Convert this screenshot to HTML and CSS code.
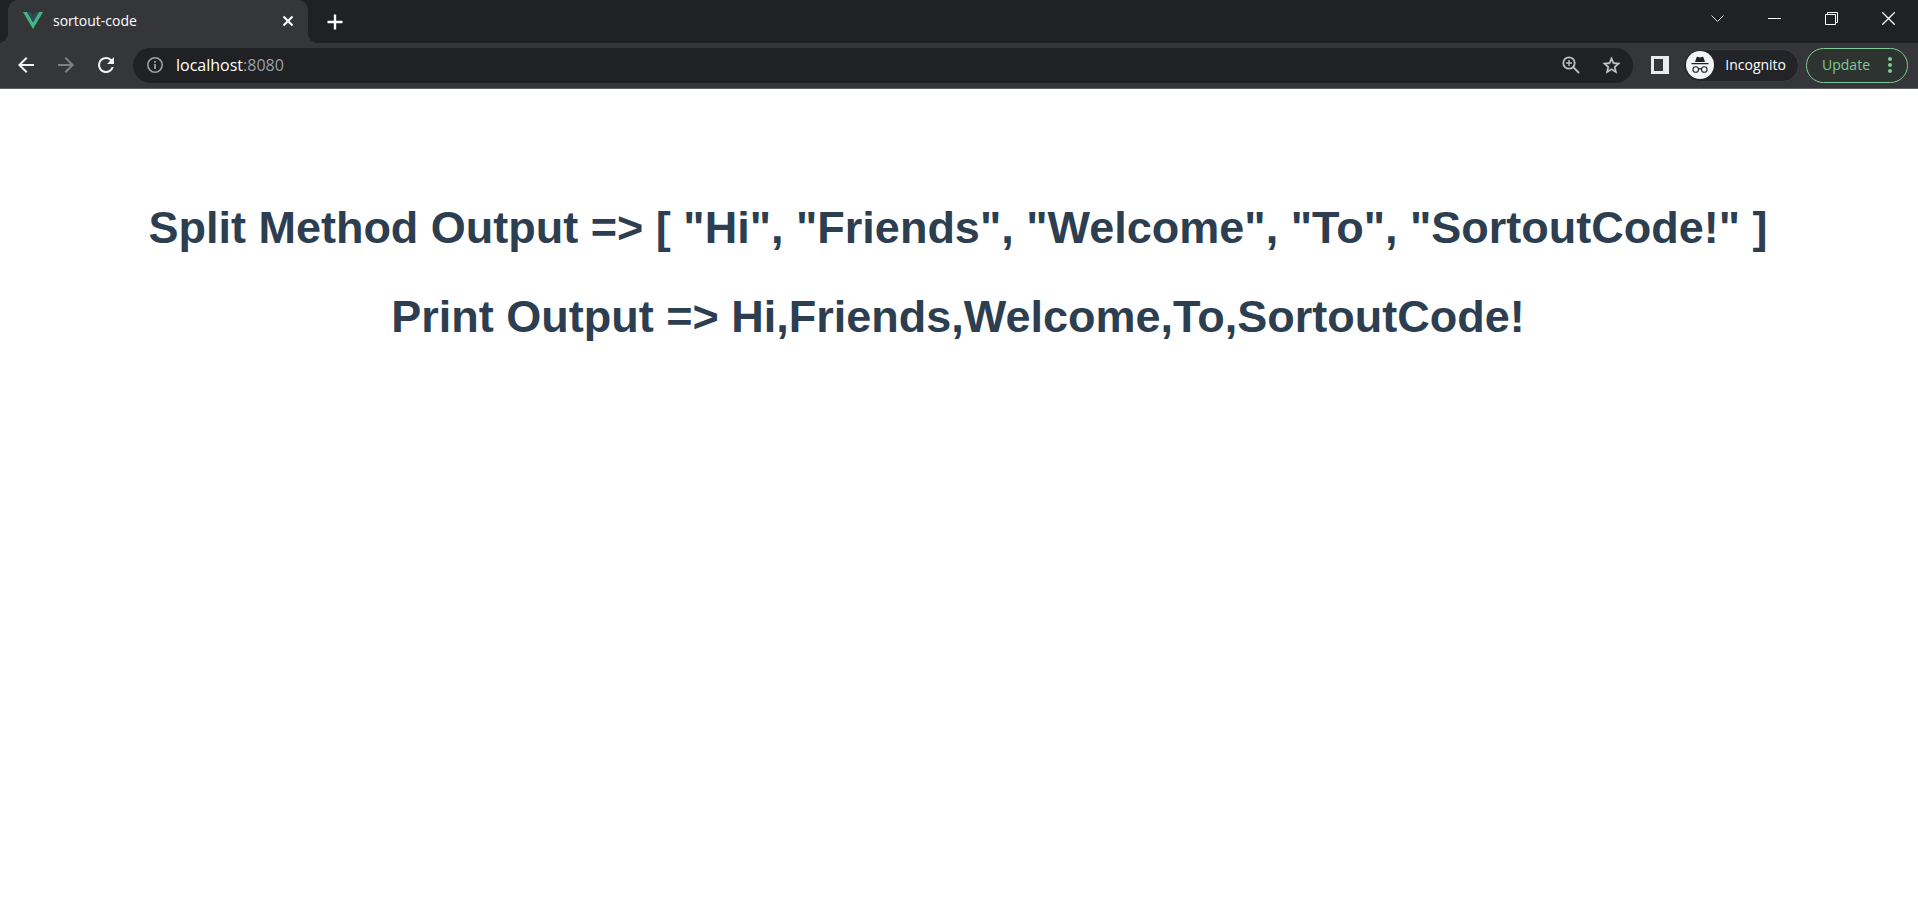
FILE: index.html
```html
<!DOCTYPE html>
<html lang="en">
<head>
<meta charset="utf-8">
<title>sortout-code</title>
<link rel="stylesheet" href="styles.css">
</head>
<body>
<header class="browser">
  <div class="tab-strip">
    <div class="tab">
      <svg class="favicon" viewBox="0 0 20 17"><path fill="#41b883" d="M0 0h4l6 10.300L16 0h4L10 17z"/><path fill="#35495e" d="M4 0h3.700L10 4l2.300-4H16l-6 10.300z"/></svg>
      <span class="tab-title">sortout-code</span>
      <button class="tab-close" aria-label="Close tab"><svg width="12" height="12" viewBox="0 0 12 12"><path d="M1.500 1.500l9 9M10.500 1.500l-9 9" stroke="#fff" stroke-width="2"/></svg></button>
    </div>
    <button class="new-tab" aria-label="New tab"><svg width="16" height="16" viewBox="0 0 16 16"><path d="M8 .5v15M.5 8h15" stroke="#fff" stroke-width="2.400"/></svg></button>
    <div class="window-controls">
      <button aria-label="Search tabs"><svg width="15" height="15" viewBox="0 0 15 15"><path d="M1.500 4.500l6 6 6-6" stroke="#ddd" fill="none"/></svg></button>
      <button aria-label="Minimize"><svg width="13" height="13" viewBox="0 0 13 13"><path d="M0 6.500h13" stroke="#fff"/></svg></button>
      <button aria-label="Restore"><svg width="13" height="13" viewBox="0 0 13 13"><path d="M.5 2.500h10v10H.5zM2.500 2.500v-2h10v10h-2" stroke="#fff" fill="none"/></svg></button>
      <button aria-label="Close"><svg width="13" height="13" viewBox="0 0 13 13"><path d="M.3.3l12.400 12.400M12.700.3L.3 12.700" stroke="#fff" stroke-width="1.300"/></svg></button>
    </div>
  </div>
  <div class="toolbar">
    <nav class="nav">
      <button aria-label="Back"><svg class="icon" viewBox="0 0 24 24"><path fill="#f1f3f4" d="M20 11H7.830l5.590-5.590L12 4l-8 8 8 8 1.410-1.410L7.830 13H20z"/></svg></button>
      <button aria-label="Forward"><svg class="icon" viewBox="0 0 24 24"><path fill="#808184" d="M12 4l-1.410 1.410L16.170 11H4v2h12.170l-5.580 5.590L12 20l8-8z"/></svg></button>
      <button aria-label="Reload"><svg class="icon" viewBox="0 0 24 24"><path fill="#f1f3f4" d="M17.650 6.350A7.960 7.960 0 0 0 12 4a8 8 0 1 0 7.730 10h-2.080A6 6 0 1 1 12 6c1.660 0 3.140.69 4.220 1.780L13 11h7V4z"/></svg></button>
    </nav>
    <div class="address">
      <button class="info" aria-label="Site information"><svg width="18" height="18" viewBox="0 0 18 18"><circle cx="9" cy="9" r="7.200" fill="none" stroke="#9aa0a6" stroke-width="1.600"/><path d="M9 8v5M9 5v1.800" stroke="#9aa0a6" stroke-width="1.800"/></svg></button>
      <a class="url" href="#">localhost<span class="port">:8080</span></a>
      <button class="tool" aria-label="Zoom"><svg width="18" height="18" viewBox="0 0 18 18"><g fill="none" stroke="#bdc1c6" stroke-width="1.800"><circle cx="7" cy="7" r="5.700"/><path d="M11.200 11.200l5.800 5.800"/><path d="M4 7h6M7 4v6" stroke-width="1.400"/></g></svg></button>
      <button class="tool" aria-label="Bookmark"><svg width="21" height="21" viewBox="0 0 24 24"><path fill="#c5c8cc" stroke="#c5c8cc" stroke-width=".4" d="M22 9.240l-7.190-.62L12 2 9.190 8.630 2 9.240l5.460 4.730L5.820 21 12 17.270 18.180 21l-1.630-7.030zM12 15.400l-3.760 2.270 1-4.280-3.320-2.880 4.380-.38L12 6.100l1.710 4.040 4.380.38-3.320 2.880 1 4.280z"/></svg></button>
    </div>
    <button class="panel" aria-label="Side panel"><svg width="18" height="18" viewBox="0 0 18 18"><path fill="#e8eaed" fill-rule="evenodd" d="M0 0h18v18H0zM3 3v12h9V3z"/></svg></button>
    <button class="incognito"><svg width="28" height="28" viewBox="0 0 28 28"><circle cx="14" cy="14" r="14" fill="#f1f3f4"/><path fill="#202124" d="M5.500 12h17v1.200h-17zM9 11l1.500-4.400c.3-.8.900-.9 1.500-.6 1.300.6 2.700.6 4 0 .6-.3 1.200-.2 1.500.6L19 11z"/><g fill="none" stroke="#202124" stroke-width="1.100"><circle cx="9.700" cy="18.500" r="2.800"/><circle cx="18.300" cy="18.500" r="2.800"/><path d="M12.500 18.200c1-.7 2-.7 3 0"/></g></svg><span>Incognito</span></button>
    <button class="update"><span>Update</span><svg width="4" height="18" viewBox="0 0 4 18"><g fill="#81c995"><circle cx="2" cy="3" r="2"/><circle cx="2" cy="9" r="2"/><circle cx="2" cy="15" r="2"/></g></svg></button>
  </div>
</header>
<main class="page">
  <h1>Split Method Output =&gt; [ "Hi", "Friends", "Welcome", "To", "SortoutCode!" ]</h1>
  <h1>Print Output =&gt; Hi,Friends,Welcome,To,SortoutCode!</h1>
</main>
</body>
</html>
```
FILE: styles.css
```css
* { box-sizing: border-box; }
body { margin: 0; background: #fff; }
button {
  display: flex; align-items: center; justify-content: center;
  margin: 0; padding: 0; border: 0; background: none; color: inherit; font: inherit;
}
svg { display: block; flex: none; }
.browser { font-family: "Open Sans", sans-serif; font-size: 14px; color: #fff; }
.tab-strip { display: flex; height: 43px; padding-left: 8px; background: #202124; }
.tab {
  position: relative; display: flex; align-items: center; gap: 10px;
  width: 300px; padding: 0 14px 2px 15px;
  border-radius: 10px 10px 0 0; background: #35363a;
}
.tab::before, .tab::after {
  content: ""; position: absolute; bottom: 0; width: 10px; height: 10px;
}
.tab::before { right: 100%; background: radial-gradient(circle at 0 0, #202124 10px, #35363a 10px); }
.tab::after { left: 100%; background: radial-gradient(circle at 100% 0, #202124 10px, #35363a 10px); }
.favicon { width: 20px; height: 17px; }
.tab-title { flex: 1; line-height: 20px; }
.new-tab { width: 54px; }
.window-controls { display: flex; margin-left: auto; height: 37px; padding-right: 1px; }
.window-controls button { width: 57px; }
.toolbar {
  display: flex; align-items: center; height: 46px;
  padding: 0 10px 1px 6px; background: #35363a; border-bottom: 1px solid #5f6063;
}
.nav { display: flex; margin-right: 7px; }
.nav button { width: 40px; height: 36px; }
.icon { width: 24px; height: 24px; }
.address {
  display: flex; align-items: center; flex: 1; height: 35px;
  padding: 0 2px 0 13px; border-radius: 18px; background: #202124;
}
.info { width: 18px; margin-right: 12px; }
.url { flex: 1; color: #fff; text-decoration: none; font-size: 16px; line-height: 24px; }
.port { color: #9aa0a6; }
.tool { width: 40px; height: 35px; }
.panel { width: 18px; margin: 0 14px 0 18px; }
.incognito {
  gap: 11px; height: 33px; padding: 0 12px 0 2px;
  border: 1px solid #3c3d41; border-radius: 17px; background: #232427;
}
.incognito span, .update span { padding-bottom: 1px; line-height: 19px; }
.update {
  gap: 18px; height: 35px; margin-left: 7px; padding: 0 15px;
  border: 1px solid #81c995; border-radius: 18px; background: #2d3331; color: #81c995;
}
.page {
  padding: 79px 10px 0 8px; text-align: center; color: #2c3e50;
  font-family: "Liberation Sans", Arial, sans-serif;
}
.page h1 { margin: 30px 0; font-size: 45px; line-height: 59px; }
```
